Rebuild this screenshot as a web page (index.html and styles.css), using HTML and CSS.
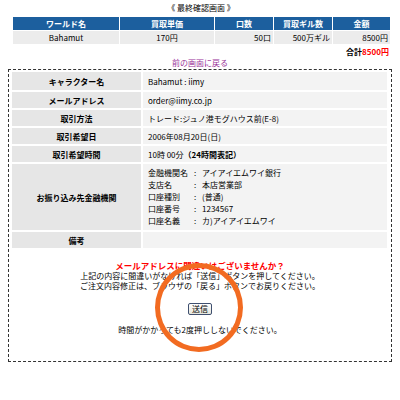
FILE: index.html
```html
<!DOCTYPE html>
<html lang="ja">
<head>
<meta charset="utf-8">
<title>最終確認画面</title>
<link rel="stylesheet" href="styles.css">
</head>
<body>
<div class="page">
  <div class="title">《 最終確認画面 》</div>
  <div class="order">
    <div class="hd">ワールド名</div>
    <div class="hd">買取単価</div>
    <div class="hd">口数</div>
    <div class="hd">買取ギル数</div>
    <div class="hd">金額</div>
    <div class="cell center">Bahamut</div>
    <div class="cell center">170円</div>
    <div class="cell right">50口</div>
    <div class="cell right">500万ギル</div>
    <div class="cell right">8500円</div>
  </div>
  <div class="total">合計<span class="red">8500円</span></div>
  <div class="back"><a href="#">前の画面に戻る</a></div>
  <div class="box">
    <div class="info">
      <div class="label">キャラクター名</div><div class="value">Bahamut : iimy</div>
      <div class="label">メールアドレス</div><div class="value">order@iimy.co.jp</div>
      <div class="label">取引方法</div><div class="value">トレード:ジュノ港モグハウス前(E-8)</div>
      <div class="label">取引希望日</div><div class="value">2006年08月20日(日)</div>
      <div class="label">取引希望時間</div><div class="value">10時 00分 <b>（24時間表記）</b></div>
      <div class="label">お振り込み先金融機関</div>
      <div class="value bank">
        <span>金融機関名</span><span>:</span><span>アイアイエムワイ銀行</span>
        <span>支店名</span><span>:</span><span>本店営業部</span>
        <span>口座種別</span><span>:</span><span>(普通)</span>
        <span>口座番号</span><span>:</span><span>1234567</span>
        <span>口座名義</span><span>:</span><span>カ)アイアイエムワイ</span>
      </div>
      <div class="label">備考</div><div class="value"></div>
    </div>
    <div class="msg">
      <p class="warn">メールアドレスに間違いはございませんか？</p>
      <p>上記の内容に間違いがなければ「送信」ボタンを押してください。</p>
      <p>ご注文内容修正は、ブラウザの「戻る」ボタンでお戻りください。</p>
      <div class="btnrow"><button class="send" type="button">送信</button></div>
      <p class="note">時間がかかっても2度押ししないでください。</p>
    </div>
  </div>
  <div class="ring"></div>
</div>
</body>
</html>
```

FILE: styles.css
```css
* { box-sizing: border-box; }
body {
  margin: 0;
  background: #fff;
  color: #000;
  font-family: "Noto Sans CJK JP", "Noto Sans", sans-serif;
  font-size: 8px;
}
.page {
  position: relative;
  width: 400px;
  height: 400px;
  padding-top: 2px;
}
.title {
  text-align: center;
  line-height: 12px;
  padding-left: 2px;
}
.order {
  display: grid;
  grid-template-columns: 106px 94px 58px 58px 57px;
  grid-auto-rows: 13px;
  gap: 1px;
  width: 377px;
  margin: 3px 0 0 13px;
}
.hd {
  background: #1c5f9e;
  color: #fff;
  font-weight: bold;
  text-align: center;
  line-height: 13px;
}
.cell {
  background: #ececec;
  line-height: 13px;
  padding: 0 2px;
}
.center { text-align: center; }
.right { text-align: right; }
.total {
  width: 389px;
  margin-top: 3px;
  text-align: right;
  font-weight: bold;
  line-height: 10px;
}
.red { color: #ff0000; }
.back {
  text-align: center;
  line-height: 10px;
  margin-top: 1px;
}
.back a {
  color: #993399;
  text-decoration: none;
}
.box {
  width: 384px;
  margin: 1px 0 0 8px;
  border: 1px dashed #333;
  padding: 2px 3px 26px 3px;
}
.info {
  display: grid;
  grid-template-columns: 129px 244px;
  grid-template-rows: 18px 16px 16px 16px 16px 66px 16px;
  gap: 2px;
}
.label {
  background: #e6e6e6;
  font-weight: bold;
  text-align: center;
  display: flex;
  align-items: center;
  justify-content: center;
}
.value {
  background: #f3f3f3;
  padding-left: 5px;
  display: flex;
  align-items: center;
}
.value.bank {
  display: grid;
  grid-template-columns: 45px 9px auto;
  grid-auto-rows: 12px;
  align-content: center;
  line-height: 12px;
}
.bank span:nth-child(3n+2) { padding-left: 1px; }
.msg {
  text-align: center;
  margin-top: 12px;
}
.msg p {
  margin: 0;
  line-height: 10px;
}
.msg .warn {
  color: #ff0000;
  font-weight: bold;
  font-size: 8.5px;
  line-height: 11px;
}
.btnrow {
  margin-top: 12px;
  height: 12px;
}
.send {
  width: 24px;
  height: 12px;
  padding: 0;
  margin: 0;
  font-family: "Noto Sans CJK JP", sans-serif;
  font-size: 8px;
  line-height: 10px;
  color: #000;
  border: 1px solid #3f4f6f;
  border-radius: 2px;
  background: linear-gradient(#ffffff, #e6e6dc);
  vertical-align: top;
}
.msg .note {
  margin-top: 10px;
}
.ring {
  position: absolute;
  left: 155px;
  top: 263px;
  width: 88px;
  height: 89px;
  border: 5px solid #f26b21;
  border-radius: 50%;
}
```
